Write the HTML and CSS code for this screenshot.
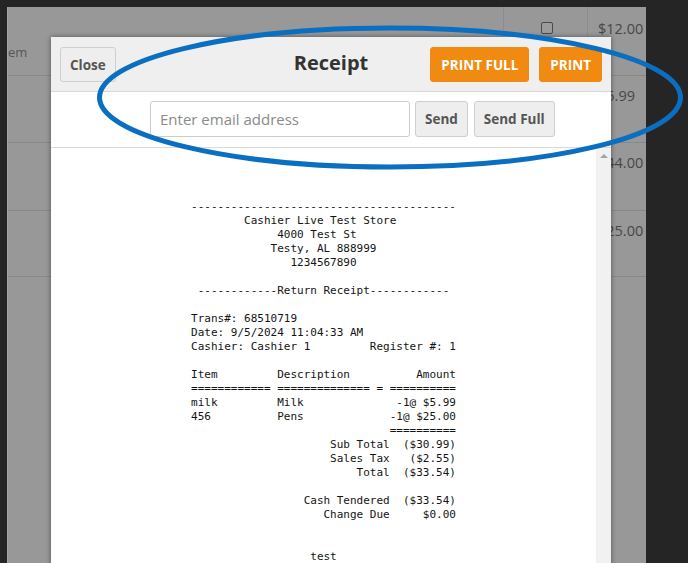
FILE: index.html
```html
<!DOCTYPE html>
<html>
<head>
<meta charset="utf-8">
<link rel="stylesheet" href="styles.css">
</head>
<body>
<div class="screen">
  <div class="panel">
    <div class="row r1">
      <div class="cell first"><span class="hdr">em</span></div>
      <div class="cell mid"><span class="chk"></span></div>
      <div class="cell last">$12.00</div>
    </div>
    <div class="row r2">
      <div class="cell first"></div>
      <div class="cell mid"></div>
      <div class="cell last">$5.99</div>
    </div>
    <div class="row r3">
      <div class="cell first"></div>
      <div class="cell mid"></div>
      <div class="cell last">$44.00</div>
    </div>
    <div class="row r4">
      <div class="cell first"></div>
      <div class="cell mid"></div>
      <div class="cell last">$25.00</div>
    </div>
    <div class="row r5">
      <div class="cell first"></div>
      <div class="cell mid"></div>
      <div class="cell last"></div>
    </div>
  </div>

  <div class="modal">
    <div class="modal-head">
      <div class="head-left"><button class="btn">Close</button></div>
      <h1 class="title">Receipt</h1>
      <div class="head-right">
        <button class="btn btn-orange">PRINT FULL</button>
        <button class="btn btn-orange">PRINT</button>
      </div>
    </div>
    <div class="email-row">
      <input class="email" type="text" placeholder="Enter email address">
      <button class="btn btn-send">Send</button>
      <button class="btn btn-send">Send Full</button>
    </div>
    <div class="receipt-body">
      <div class="receipt-scroll">
<pre class="receipt">----------------------------------------
        Cashier Live Test Store
             4000 Test St
            Testy, AL 888999
               1234567890

 ------------Return Receipt------------

Trans#: 68510719
Date: 9/5/2024 11:04:33 AM
Cashier: Cashier 1         Register #: 1

Item         Description          Amount
============ ============== = ==========
milk         Milk              -1@ $5.99
456          Pens             -1@ $25.00
                              ==========
                     Sub Total  ($30.99)
                     Sales Tax   ($2.55)
                         Total  ($33.54)

                 Cash Tendered  ($33.54)
                    Change Due     $0.00


                  test</pre>
      </div>
      <div class="scrollbar"><span class="arrow-up"></span></div>
    </div>
  </div>

  <svg class="annotation" width="688" height="563" viewBox="0 0 688 563" xmlns="http://www.w3.org/2000/svg">
    <ellipse cx="390" cy="97.5" rx="290.5" ry="69.5" fill="none" stroke="#0a6fc0" stroke-width="5"/>
  </svg>
</div>
</body>
</html>
```

FILE: styles.css
```css
* { box-sizing: border-box; }

html, body {
  margin: 0;
  padding: 0;
  width: 688px;
  height: 563px;
  overflow: hidden;
  background: #252525;
  font-family: "Open Sans", "Liberation Sans", sans-serif;
}

.screen {
  position: relative;
  width: 688px;
  height: 563px;
  padding: 7px 42px 0 7px;
}

.panel {
  height: 556px;
  background: #989898;
  overflow: hidden;
  display: flex;
  flex-direction: column;
  border-left: 1px solid #a4a4a4;
}

.row {
  display: grid;
  grid-template-columns: 1fr 84px 58px;
  border-bottom: 1px solid #888888;
  color: #474747;
  font-size: 14px;
}

.r1 { height: 69px; }
.r2 { height: 67px; }
.r3 { height: 68px; }
.r4 { height: 66px; }
.r5 { flex: 1; border-bottom: none; }

.cell {
  display: flex;
  align-items: flex-start;
  border-right: 1px solid #8c8c8c;
}

.cell.last {
  border-right: none;
  padding-left: 10px;
  padding-top: 10px;
  font-size: 14.5px;
}

.r1 .cell.last { padding-top: 12px; }

.cell.mid { justify-content: center; }

.hdr {
  padding-top: 36px;
  color: #555;
  font-size: 13px;
}

.r1 .cell.mid { padding-top: 15px; padding-left: 3px; }

.chk {
  width: 12px;
  height: 12px;
  border: 1px solid #4a4a4a;
  border-radius: 2px;
  background: #9b9b9b;
}

/* Modal */
.modal {
  position: absolute;
  left: 51px;
  top: 37px;
  width: 560px;
  height: 540px;
  background: #ffffff;
  box-shadow: 0 0 5px rgba(0, 0, 0, 0.45);
  display: flex;
  flex-direction: column;
}

.modal-head {
  height: 55px;
  background: #efefef;
  border-bottom: 1px solid #d6d6d6;
  display: grid;
  grid-template-columns: 1fr auto 1fr;
  align-items: start;
  padding: 10px 9px 0 9px;
}

.head-left { display: flex; }
.head-right { display: flex; justify-content: flex-end; gap: 10px; }

.title {
  margin: 0;
  padding-top: 3px;
  font-size: 20px;
  font-weight: 700;
  color: #333;
  line-height: 26px;
}

.btn {
  font-family: "Open Sans", "Liberation Sans", sans-serif;
  font-weight: 700;
  font-size: 13.5px;
  height: 35px;
  border-radius: 3px;
  border: 1px solid #cfcfcf;
  background: #eeeeee;
  color: #555;
  padding: 0 9px;
  cursor: pointer;
}

.btn-orange {
  background: #f08a10;
  border-color: #f08a10;
  color: #ffffff;
  padding: 0 10px;
}

.email-row {
  height: 56px;
  border-bottom: 1px solid #d9d9d9;
  display: flex;
  align-items: flex-start;
  gap: 5px;
  padding: 9px 0 0 99px;
}

.email {
  width: 260px;
  height: 36px;
  border: 1px solid #cccccc;
  border-radius: 3px;
  font-family: "Open Sans", "Liberation Sans", sans-serif;
  font-size: 15px;
  padding: 0 9px;
  color: #333;
}

.email::placeholder { color: #8a8a8a; }

.btn-send {
  height: 36px;
  padding: 0 9px;
}

.btn-send + .btn-send { margin-left: 1px; }

.receipt-body {
  flex: 1;
  display: flex;
}

.receipt-scroll {
  flex: 1;
  display: flex;
  justify-content: center;
  padding-top: 52px;
}

.receipt {
  margin: 0;
  font-family: "DejaVu Sans Mono", "Liberation Mono", monospace;
  font-size: 11px;
  line-height: 14px;
  color: #141414;
}

.scrollbar {
  width: 15px;
  background: #f1f1f1;
  display: flex;
  justify-content: center;
  padding-top: 6px;
}

.arrow-up {
  width: 0;
  height: 0;
  border-left: 4px solid transparent;
  border-right: 4px solid transparent;
  border-bottom: 4px solid #a3a3a3;
}

.annotation {
  position: absolute;
  left: 0;
  top: 0;
  pointer-events: none;
}
```
